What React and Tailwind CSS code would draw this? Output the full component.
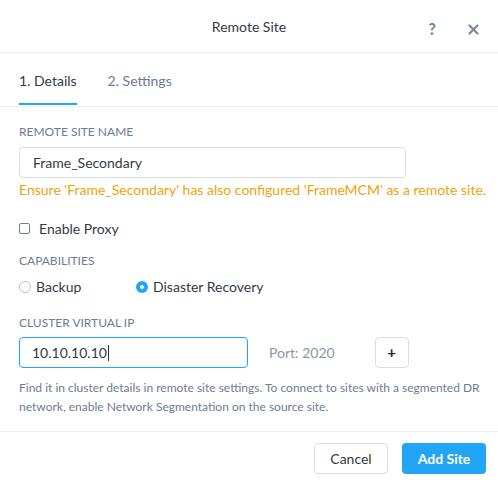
import React from "react";

export default function App() {
  return (
    <div className="w-[498px] h-[487px] bg-white text-[#2f3a48] flex flex-col" style={{ fontFamily: "Lato, 'Liberation Sans', sans-serif" }}>
      <div className="h-[53px] shrink-0 border-b border-[#eceef0] flex items-center relative">
        <div className="flex-1 text-center text-[14px] text-[#333a44]">Remote Site</div>
        <div className="absolute right-[19px] top-[17px] flex items-center gap-[32px] text-[#7a8899]">
          <span className="text-[16px] font-black">?</span>
          <svg width="11" height="11" viewBox="0 0 11 11"><path d="M1.5 1.5L9.5 9.5M9.5 1.5L1.5 9.5" stroke="#7a8899" strokeWidth="2.2" strokeLinecap="round" /></svg>
        </div>
      </div>
      <div className="h-[54px] shrink-0 border-b border-[#eceef0] flex items-end px-[19px] gap-[31px]">
        <div className="h-full flex flex-col justify-center relative text-[14px] text-[#333a44]">
          <span className="pt-[1px]">1. Details</span>
          <div className="absolute left-0 right-0 bottom-[1px] h-[2px] bg-[#22a5f7]" />
        </div>
        <div className="h-full flex flex-col justify-center text-[14px] text-[#6b7c93]">
          <span className="pt-[1px]">2. Settings</span>
        </div>
      </div>
      <div className="flex-1 px-[19px] pt-[18px] flex flex-col">
        <div className="text-[12px] text-[#6b7c93] leading-[14px]">REMOTE SITE NAME</div>
        <div className="mt-[8px] w-[387px] h-[31px] border border-[#d8dde3] rounded-[4px] flex items-center px-[13px] text-[14px] text-[#333a44]">Frame_Secondary</div>
        <div className="mt-[3px] text-[14px] text-[#f0a30a] leading-[18px] whitespace-nowrap">Ensure 'Frame_Secondary' has also configured 'FrameMCM' as a remote site.</div>
        <div className="mt-[19px] flex items-center gap-[9px]">
          <div className="w-[11px] h-[11px] border border-[#6b7c93] rounded-[2px]" />
          <span className="text-[14px] text-[#333a44]">Enable Proxy</span>
        </div>
        <div className="mt-[15px] text-[12px] text-[#6b7c93] leading-[14px]">CAPABILITIES</div>
        <div className="mt-[8px] flex items-center text-[14px] text-[#333a44]">
          <div className="flex items-center gap-[5px] w-[117px]">
            <div className="w-[12px] h-[12px] rounded-full border border-[#b8c1cc]" />
            <span>Backup</span>
          </div>
          <div className="flex items-center gap-[5px]">
            <div className="w-[12px] h-[12px] rounded-full bg-[#22a5f7] flex items-center justify-center">
              <div className="w-[4px] h-[4px] rounded-full bg-white" />
            </div>
            <span>Disaster Recovery</span>
          </div>
        </div>
        <div className="mt-[19px] text-[12px] text-[#6b7c93] leading-[14px]">CLUSTER VIRTUAL IP</div>
        <div className="mt-[7px] flex items-center">
          <div className="w-[229px] h-[31px] border border-[#22a5f7] rounded-[4px] flex items-center px-[12px] text-[14px] text-[#333a44]">
            10.10.10.10<span className="w-px h-[16px] bg-[#333] ml-[1px]" />
          </div>
          <div className="ml-[21px] text-[14px] text-[#8a97a6]">Port: 2020</div>
          <div className="ml-[40px] w-[34px] h-[31px] border border-[#d8dde3] rounded-[4px] flex items-center justify-center text-[15px] font-bold text-[#222]">+</div>
        </div>
        <div className="mt-[10px] w-[472px] text-[12px] text-[#6b7c93] leading-[19px]">
          Find it in cluster details in remote site settings. To connect to sites with a segmented DR network, enable Network Segmentation on the source site.
        </div>
      </div>
      <div className="h-[56px] shrink-0 border-t border-[#eceef0] flex items-start justify-end gap-[14px] pr-[12px] pt-[11px]">
        <div className="w-[74px] h-[31px] border border-[#d8dde3] rounded-[4px] flex items-center justify-center text-[14px] text-[#333a44]">Cancel</div>
        <div className="w-[84px] h-[31px] bg-[#22a5f7] rounded-[4px] flex items-center justify-center text-[14px] font-bold text-white">Add Site</div>
      </div>
    </div>
  );
}
